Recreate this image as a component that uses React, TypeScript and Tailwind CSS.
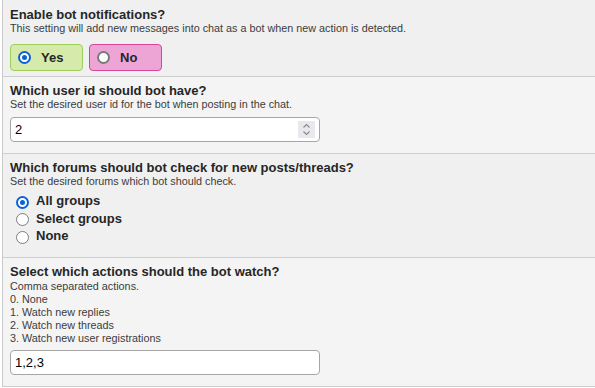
import React from "react";

const font = { fontFamily: '"Liberation Sans", Arial, sans-serif' };

function Radio({ checked, thick }: { checked?: boolean; thick?: boolean }) {
  if (checked) {
    return (
      <span className="flex h-[13px] w-[13px] shrink-0 items-center justify-center rounded-full border-2 border-[#0b62d6] bg-white">
        <span className="block h-[5px] w-[5px] rounded-full bg-[#0b62d6]" />
      </span>
    );
  }
  return (
    <span
      className={
        thick
          ? "block h-[13px] w-[13px] shrink-0 rounded-full border-2 border-[#7a7a7a] bg-white"
          : "block h-[13px] w-[13px] shrink-0 rounded-full border-[1.5px] border-[#7d7d7d] bg-white"
      }
    />
  );
}

function Title({ children }: { children: React.ReactNode }) {
  return <div className="text-[13px] font-bold leading-[15px] text-[#262626]">{children}</div>;
}

function Desc({ children }: { children: React.ReactNode }) {
  return <div className="text-[10.8px] leading-[13px] text-[#3c3c3c]">{children}</div>;
}

export default function App() {
  return (
    <div className="h-[388px] w-[595px] overflow-hidden bg-white" style={font}>
      <div className="ml-[2px] border-l border-[#c9c9c9]">
        {/* Section 1 */}
        <div className="h-[77px] border-b border-[#cdcdcd] bg-[#f0f0f0] pl-[7px] pt-[7px]">
          <Title>Enable bot notifications?</Title>
          <Desc>This setting will add new messages into chat as a bot when new action is detected.</Desc>
          <div className="mt-[9px] flex gap-[6px]">
            <div className="flex h-[27px] w-[73px] items-center gap-[10px] rounded-[4px] border border-[#9ccf5a] bg-[#d6ebab] pl-[7px]">
              <Radio checked />
              <span className="text-[13px] font-bold text-[#262626]">Yes</span>
            </div>
            <div className="flex h-[27px] w-[73px] items-center gap-[10px] rounded-[4px] border border-[#d4479b] bg-[#eda5d6] pl-[7px]">
              <Radio thick />
              <span className="text-[13px] font-bold text-[#262626]">No</span>
            </div>
          </div>
        </div>

        {/* Section 2 */}
        <div className="h-[77px] border-b border-[#cdcdcd] bg-[#f4f4f4] pl-[7px] pt-[6px]">
          <Title>Which user id should bot have?</Title>
          <Desc>Set the desired user id for the bot when posting in the chat.</Desc>
          <div className="mt-[6px] flex h-[25px] w-[310px] items-center justify-between rounded-[4px] border border-[#a6a6a6] bg-white pl-[4px] pr-[4px]">
            <span className="text-[13px] text-black">2</span>
            <span className="flex h-[17px] w-[17px] flex-col items-center justify-center bg-[#e9e9ed]">
              <svg width="9" height="13" viewBox="0 0 9 13" fill="none" stroke="#8a8a8a" strokeWidth="1.1">
                <path d="M1.5 4.5 L4.5 1.5 L7.5 4.5" />
                <path d="M1.5 8.5 L4.5 11.5 L7.5 8.5" />
              </svg>
            </span>
          </div>
        </div>

        {/* Section 3 */}
        <div className="h-[104px] border-b border-[#cdcdcd] bg-[#f0f0f0] pl-[7px] pt-[6px]">
          <Title>Which forums should bot check for new posts/threads?</Title>
          <Desc>Set the desired forums which bot should check.</Desc>
          <div className="mt-[4px] flex flex-col">
            {[
              { label: "All groups", checked: true },
              { label: "Select groups", checked: false },
              { label: "None", checked: false },
            ].map((o) => (
              <div key={o.label} className="flex h-[17.5px] items-center gap-[7px] pl-[6px]">
                <span className="mt-[3px] flex">
                  <Radio checked={o.checked} />
                </span>
                <span className="text-[13px] font-bold leading-[15px] text-[#262626]">{o.label}</span>
              </div>
            ))}
          </div>
        </div>

        {/* Section 4 */}
        <div className="h-[129px] border-b border-[#cdcdcd] bg-[#f4f4f4] pl-[7px] pt-[6px]">
          <Title>Select which actions should the bot watch?</Title>
          <div className="mt-[1px]">
            <Desc>Comma separated actions.</Desc>
            <Desc>0. None</Desc>
            <Desc>1. Watch new replies</Desc>
            <Desc>2. Watch new threads</Desc>
            <Desc>3. Watch new user registrations</Desc>
          </div>
          <div className="mt-[5px] flex h-[25px] w-[310px] items-center rounded-[4px] border border-[#a6a6a6] bg-white pl-[4px]">
            <span className="text-[13px] text-black">1,2,3</span>
          </div>
        </div>
      </div>
    </div>
  );
}
